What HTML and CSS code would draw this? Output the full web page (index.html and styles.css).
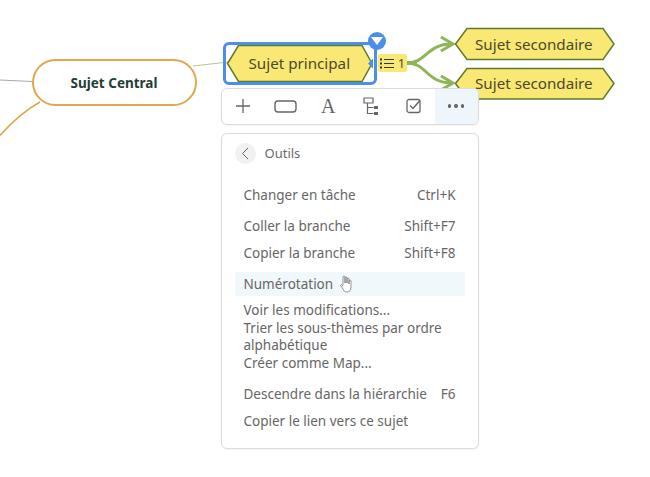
FILE: index.html
```html
<!DOCTYPE html>
<html lang="fr">
<head>
<meta charset="utf-8">
<title>Outils</title>
<link rel="stylesheet" href="styles.css">
</head>
<body>
<div class="canvas">
  <svg class="links" width="650" height="477" viewBox="0 0 650 477">
    <path d="M0 80 L32 81.500" fill="none" stroke="#a8a8a4" stroke-width="1"/>
    <path d="M0 135.500 Q20 113 40 102" fill="none" stroke="#e2a445" stroke-width="1.500"/>
    <path d="M193 66 L228 62" fill="none" stroke="#b4c98a" stroke-width="1"/>
    <path d="M407 63 C427 63 426 44 452 44 M407 63 C427 63 426 83 452 83" fill="none" stroke="#8fb556" stroke-width="3"/>
    <path d="M407 63 H417" fill="none" stroke="#8fb556" stroke-width="4"/>
    <path d="M441 37 L453 44 L441 51 M441 76 L453 83 L441 90" fill="none" stroke="#8fb556" stroke-width="3"/>
    <polygon class="hex" points="227.500,63.500 238.500,45.500 362,45.500 372,63.500 362,81.500 238.500,81.500"/>
    <polygon class="hex" points="455.500,44 467,28.500 603,28.500 614,44 603,59.500 467,59.500"/>
    <polygon class="hex" points="455.500,83.500 467,68.500 603,68.500 614,83.500 603,99 467,99"/>
    <polygon points="368,63.500 373,58.500 373,68.500" fill="#4a90e8"/>
  </svg>
  <div class="central">Sujet Central</div>
  <div class="selection"></div>
  <div class="main-label">Sujet principal</div>
  <div class="sec-label sec-one">Sujet secondaire</div>
  <div class="sec-label sec-two">Sujet secondaire</div>
  <div class="badge-down"><svg width="12" height="8" viewBox="0 0 12 8"><path d="M0 0H12L6 8Z" fill="#fff"/></svg></div>
  <div class="task-badge">
    <svg width="14" height="11" viewBox="0 0 14 11"><path d="M0 1.500h2M0 5.500h2M0 9.500h2" stroke="#33372e" stroke-width="2" fill="none"/><path d="M4 1.500h10M4 5.500h10M4 9.500h10" stroke="#33372e" stroke-width="1.200" fill="none"/></svg>
    <span>1</span>
  </div>
  <div class="toolbar">
    <div class="tool"><svg width="16" height="16" viewBox="0 0 16 16"><path d="M8 1v14M1 8h14" stroke="#666" stroke-width="1.300" fill="none"/></svg></div>
    <div class="tool"><svg width="23" height="13" viewBox="0 0 23 13"><rect x="1" y="1" width="21" height="11" rx="3" stroke="#666" stroke-width="1.400" fill="none"/></svg></div>
    <div class="tool tool-a">A</div>
    <div class="tool"><svg width="16" height="19" viewBox="0 0 16 19"><path d="M1 1h9v5H1zM4.500 6v10.500h6M4.500 10.500h6" stroke="#666" stroke-width="1.200" fill="none"/><path d="M11 9h4v3h-4zM11 15h4v3h-4z" fill="#666"/></svg></div>
    <div class="tool"><svg width="16" height="16" viewBox="0 0 16 16"><rect x="1" y="1.500" width="13" height="13" rx="2" stroke="#666" stroke-width="1.300" fill="none"/><path d="M4 7.500l3 3 7-8" stroke="#666" stroke-width="1.500" fill="none"/></svg></div>
    <div class="tool tool-more"><i></i><i></i><i></i></div>
  </div>
  <div class="menu">
    <div class="menu-head">
      <span class="back"><svg width="8" height="13" viewBox="0 0 8 13"><path d="M7 1L1.500 6.500L7 12" stroke="#666" stroke-width="1" fill="none"/></svg></span>
      <span>Outils</span>
    </div>
    <div class="item first"><span>Changer en tâche</span><span>Ctrl+K</span></div>
    <div class="item gap"><span>Coller la branche</span><span>Shift+F7</span></div>
    <div class="item"><span>Copier la branche</span><span>Shift+F8</span></div>
    <div class="item active"><span>Numérotation</span></div>
    <div class="stack">
      <div>Voir les modifications...</div>
      <div>Trier les sous-thèmes par ordre alphabétique</div>
      <div>Créer comme Map...</div>
    </div>
    <div class="item gap2"><span>Descendre dans la hiérarchie</span><span>F6</span></div>
    <div class="item"><span>Copier le lien vers ce sujet</span></div>
  </div>
  <svg class="cursor" width="12" height="18" viewBox="0 0 12 18"><path d="M3 10V2a1 1 0 0 1 2 0V8V3a1 1 0 0 1 2 0V8V4a1 1 0 0 1 2 0V9V6a1 1 0 0 1 2 0V12c0 3-1.500 5-4 5s-3-1-4-3L.8 11c-.5-1 .8-2 1.500-1L3 11.500" fill="#fff" stroke="#666" stroke-width="0.700"/></svg>
</div>
</body>
</html>
```
FILE: styles.css
```css
* { box-sizing: border-box; }
html, body { margin: 0; padding: 0; background: #fff; }
body { font-family: "Noto Sans", "Open Sans", sans-serif; }
.canvas { position: relative; width: 650px; height: 477px; overflow: hidden; }
.links { position: absolute; left: 0; top: 0; }
.hex { fill: #f9e873; stroke: #5f7a2c; stroke-width: 1.500; }
.central { position: absolute; left: 31.500px; top: 59px; width: 165px; height: 47px; border: 2px solid #e3a64e; border-radius: 23.500px; background: #fff; display: flex; align-items: center; justify-content: center; font-size: 13.500px; font-weight: 700; color: #1f3d38; }
.selection { position: absolute; left: 223px; top: 41.500px; width: 154px; height: 43.500px; border: 3.500px solid #4a90e8; border-radius: 6px; }
.main-label, .sec-label { position: absolute; font-size: 15.200px; line-height: 20px; color: #4b4a2c; white-space: nowrap; }
.main-label { left: 248.500px; top: 53px; }
.sec-one { left: 475px; top: 33.500px; }
.sec-two { left: 475px; top: 73px; }
.badge-down { position: absolute; left: 368px; top: 32px; width: 18px; height: 18px; border-radius: 50%; background: #4a90e8; display: flex; align-items: center; justify-content: center; }
.task-badge { position: absolute; left: 378px; top: 54px; width: 29px; height: 18px; border-radius: 2px; background: #f9e873; display: flex; align-items: center; justify-content: center; gap: 4px; font-size: 12px; color: #4b4a2c; }
.toolbar { position: absolute; left: 220.500px; top: 87.500px; width: 258px; height: 37px; border: 1px solid #dcdcdc; border-radius: 6px; background: #fff; display: flex; overflow: hidden; box-shadow: 0 1px 2px rgba(0,0,0,.05); }
.tool { flex: 1; display: flex; align-items: center; justify-content: center; }
.tool-a { font-family: "Liberation Serif", serif; font-size: 20px; color: #666; }
.tool-more { background: #eef6fb; gap: 3px; }
.tool-more i { width: 3.500px; height: 3.500px; border-radius: 50%; background: #666; }
.menu { position: absolute; left: 220.500px; top: 132.500px; width: 258px; height: 316.500px; border: 1px solid #dcdcdc; border-radius: 6px; background: #fff; padding: 9px 13px; box-shadow: 0 1px 2px rgba(0,0,0,.05); font-size: 13.500px; color: #666; }
.menu-head { display: flex; align-items: center; gap: 9px; height: 21px; margin-bottom: 19px; color: #6a6a6a; font-size: 13px; }
.back { width: 21px; height: 21px; border-radius: 50%; background: #f1f1f1; display: flex; align-items: center; justify-content: center; }
.item { display: flex; justify-content: space-between; align-items: center; height: 24px; padding: 0 9px; white-space: nowrap; }
.item + .item { margin-top: 3px; }
.item.gap { margin-top: 7px; }
.item.active { background: #f1f8fc; margin-top: 7px; }
.stack { margin-top: 6.500px; padding: 0 9px; line-height: 17.500px; }
.item.gap2 { margin-top: 9.500px; }
.cursor { position: absolute; left: 340px; top: 275px; }
```
